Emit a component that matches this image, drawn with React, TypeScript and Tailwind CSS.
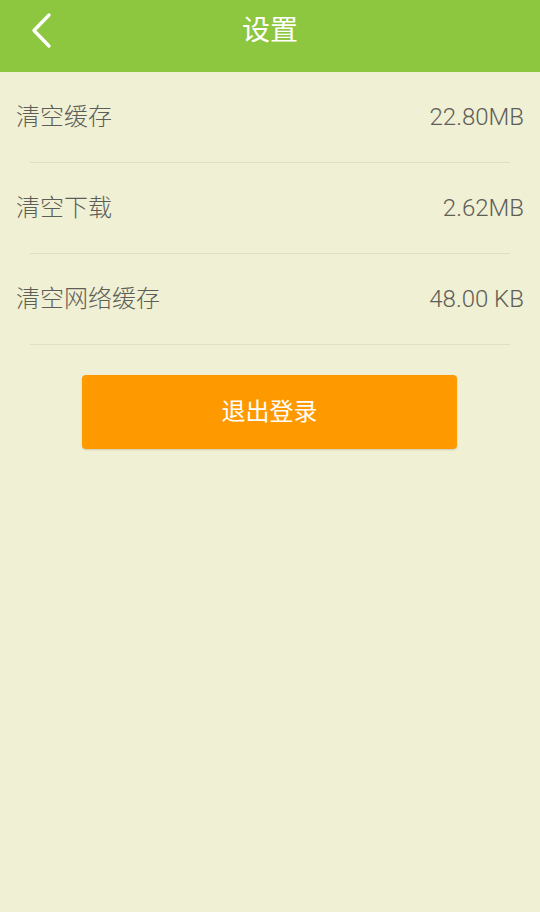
const rows = [
  { label: "清空缓存", value: "22.80MB" },
  { label: "清空下载", value: "2.62MB" },
  { label: "清空网络缓存", value: "48.00 KB" },
];

export default function App() {
  return (
    <div className="min-h-[912px] w-[540px] bg-[#f0f0d4] font-['Roboto','Noto_Sans_CJK_SC',sans-serif]">
      {/* 顶部栏 */}
      <div className="h-[72px] bg-[#8dc63f] flex items-center relative">
        <button className="absolute left-[30px] top-[12px] text-white">
          <svg width="24" height="38" viewBox="0 0 24 38" fill="none">
            <polyline
              points="19,3 4,18.5 19,34"
              stroke="currentColor"
              strokeWidth="3.4"
              strokeLinecap="round"
              strokeLinejoin="round"
            />
          </svg>
        </button>
        <div className="flex-1 text-center text-white text-[28px] leading-none -mt-[10px]">
          设置
        </div>
      </div>

      {/* 列表 */}
      <div className="flex flex-col">
        {rows.map((r) => (
          <div key={r.label} className="h-[91px] flex flex-col">
            <div className="flex-1 flex items-center justify-between px-[16px] text-[24px] font-light text-[#5e5e58]">
              <span>{r.label}</span>
              <span>{r.value}</span>
            </div>
            <div className="mx-[30px] h-px bg-[#e0e0c8]" />
          </div>
        ))}
      </div>

      {/* 退出按钮 */}
      <div className="flex pt-[30px] pl-[82px]">
        <button className="w-[375px] h-[74px] bg-[#ff9900] rounded-[4px] text-white text-[24px] shadow-[0_1px_2px_rgba(0,0,0,0.15)]">
          退出登录
        </button>
      </div>
    </div>
  );
}
